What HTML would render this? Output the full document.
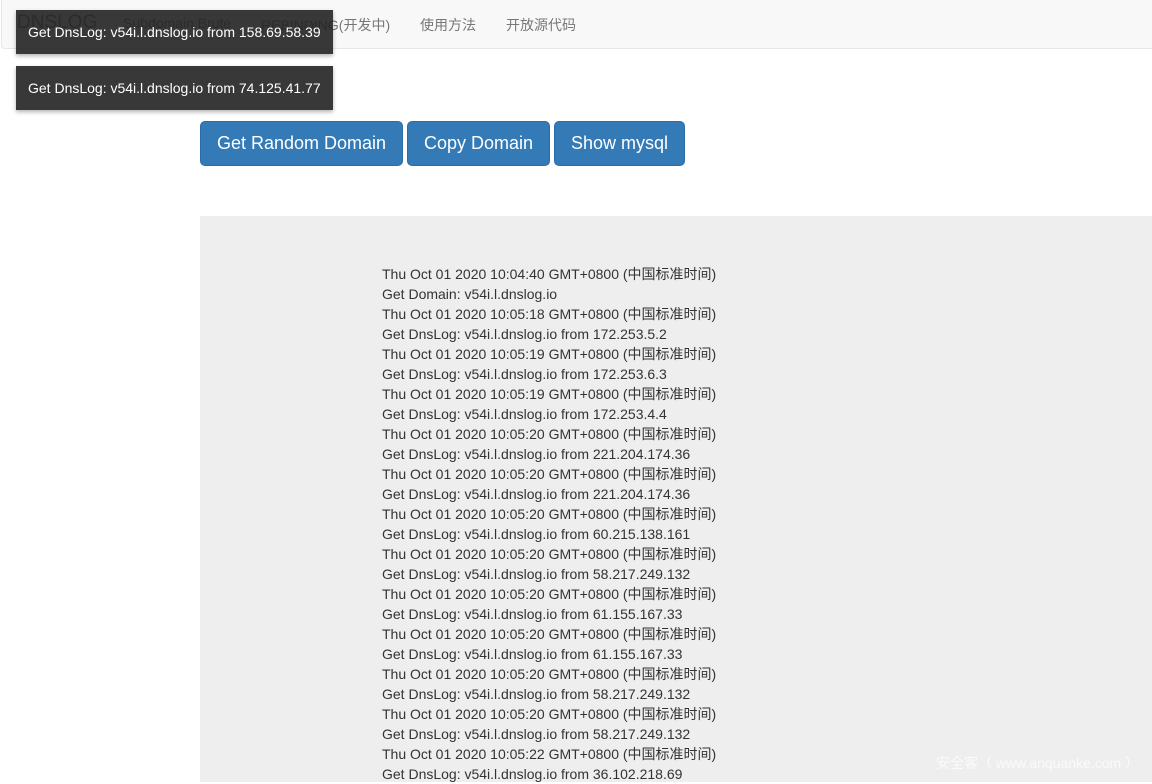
<!DOCTYPE html>
<html><head><meta charset="utf-8"><style>
body{margin:0;width:1152px;height:782px;overflow:hidden;background:#fff;font-family:"Liberation Sans","Noto Sans CJK SC",sans-serif;color:#333;position:relative}
.nav{position:absolute;left:1px;top:0;width:1160px;height:49px;background:#f8f8f8;border:1px solid #e7e7e7;border-top:none;border-radius:0 0 4px 4px;box-sizing:border-box}
.nav span{position:absolute;top:15px;font-size:14px;color:#777}
.brand{left:15px!important;top:12px!important;font-size:19px!important}
.toast{position:absolute;left:16px;width:317px;height:44px;background:rgba(34,34,34,0.9);color:#fff;font-size:14px;line-height:44px;padding-left:12px;box-sizing:border-box;box-shadow:0 2px 4px rgba(0,0,0,.3)}
.btn{position:absolute;top:121px;height:45px;background:#337ab7;border:1px solid #2e6da4;border-radius:5px;color:#fff;font-size:18px;line-height:43px;text-align:center;box-sizing:border-box}
.gray{position:absolute;left:200px;top:216px;width:952px;height:566px;background:#eee}
.log{position:absolute;left:382px;top:264px;font-size:14px;line-height:20px;white-space:pre}
.wm{position:absolute;left:936px;top:753px;color:#fafafa;font-size:14px}
</style></head><body>
<div class="nav"><span class="brand">DNSLOG</span><span style="left:121px">Subdomain Brute</span><span style="left:259px">REBINDING(开发中)</span><span style="left:418px">使用方法</span><span style="left:504px">开放源代码</span></div>
<div class="toast" style="top:10px">Get DnsLog: v54i.l.dnslog.io from 158.69.58.39</div>
<div class="toast" style="top:66px">Get DnsLog: v54i.l.dnslog.io from 74.125.41.77</div>
<div class="btn" style="left:200px;width:203px">Get Random Domain</div>
<div class="btn" style="left:407px;width:143px">Copy Domain</div>
<div class="btn" style="left:554px;width:131px">Show mysql</div>
<div class="gray"></div>
<div class="log">Thu Oct 01 2020 10:04:40 GMT+0800 (中国标准时间)
Get Domain: v54i.l.dnslog.io
Thu Oct 01 2020 10:05:18 GMT+0800 (中国标准时间)
Get DnsLog: v54i.l.dnslog.io from 172.253.5.2
Thu Oct 01 2020 10:05:19 GMT+0800 (中国标准时间)
Get DnsLog: v54i.l.dnslog.io from 172.253.6.3
Thu Oct 01 2020 10:05:19 GMT+0800 (中国标准时间)
Get DnsLog: v54i.l.dnslog.io from 172.253.4.4
Thu Oct 01 2020 10:05:20 GMT+0800 (中国标准时间)
Get DnsLog: v54i.l.dnslog.io from 221.204.174.36
Thu Oct 01 2020 10:05:20 GMT+0800 (中国标准时间)
Get DnsLog: v54i.l.dnslog.io from 221.204.174.36
Thu Oct 01 2020 10:05:20 GMT+0800 (中国标准时间)
Get DnsLog: v54i.l.dnslog.io from 60.215.138.161
Thu Oct 01 2020 10:05:20 GMT+0800 (中国标准时间)
Get DnsLog: v54i.l.dnslog.io from 58.217.249.132
Thu Oct 01 2020 10:05:20 GMT+0800 (中国标准时间)
Get DnsLog: v54i.l.dnslog.io from 61.155.167.33
Thu Oct 01 2020 10:05:20 GMT+0800 (中国标准时间)
Get DnsLog: v54i.l.dnslog.io from 61.155.167.33
Thu Oct 01 2020 10:05:20 GMT+0800 (中国标准时间)
Get DnsLog: v54i.l.dnslog.io from 58.217.249.132
Thu Oct 01 2020 10:05:20 GMT+0800 (中国标准时间)
Get DnsLog: v54i.l.dnslog.io from 58.217.249.132
Thu Oct 01 2020 10:05:22 GMT+0800 (中国标准时间)
Get DnsLog: v54i.l.dnslog.io from 36.102.218.69</div>
<div class="wm">安全客（ www.anquanke.com ）</div>
</body></html>
